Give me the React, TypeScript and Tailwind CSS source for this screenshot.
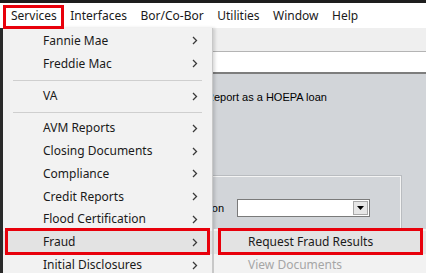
const font = { fontFamily: '"Noto Sans", "Open Sans", sans-serif' };

function Chevron() {
  return (
    <svg width="6" height="9" viewBox="0 0 6 9" className="shrink-0">
      <polyline points="1,1 4.5,4.5 1,8" fill="none" stroke="#3a3a3a" strokeWidth="1.3" />
    </svg>
  );
}

type Item = { label: string; sep?: number };

const items: Item[] = [
  { label: "Fannie Mae" },
  { label: "Freddie Mac" },
  { label: "", sep: 10 },
  { label: "VA" },
  { label: "", sep: 9 },
  { label: "AVM Reports" },
  { label: "Closing Documents" },
  { label: "Compliance" },
  { label: "Credit Reports" },
  { label: "Flood Certification" },
  { label: "Fraud" },
  { label: "Initial Disclosures" },
];

export default function App() {
  return (
    <div className="relative w-[426px] h-[273px] overflow-hidden bg-white text-[12px] text-[#1a1a1a]" style={font}>
      <div className="h-[3px] bg-[#1e1e1e]" />
      {/* menu bar */}
      <div className="h-[25px] flex items-center pl-[11px] gap-[13.5px] bg-white">
        <span>Services</span>
        <span>Interfaces</span>
        <span>Bor/Co-Bor</span>
        <span>Utilities</span>
        <span>Window</span>
        <span>Help</span>
      </div>

      {/* underlying window */}
      <div className="flex h-[245px]">
        <div className="w-[3px] bg-[#2a2a2a]" />
        <div className="flex-1 flex flex-col">
          <div className="h-[24px] bg-[#efefef] border-b border-[#b4b4b4]" />
          <div className="h-[22px] bg-white border-b-2 border-[#7d7d7d]" />
          <div className="flex-1 bg-[#d2d5d9] pl-[203px] pt-[17px]" style={{ fontFamily: '"Liberation Sans", Arial, sans-serif' }}>
            <div className="text-[11px] leading-[13px] text-black">Report as a HOEPA loan</div>
            <div className="mt-[71px] w-[196px] h-[60px] border-t border-r border-[#b9bcc0] shadow-[inset_-1px_1px_0_#f4f4f4] pt-[23px]">
              <div className="h-[18px] flex items-center">
                <div className="w-[18px] flex justify-end">
                  <span className="text-[11px] text-black whitespace-nowrap">Location</span>
                </div>
                <div className="ml-[13px] w-[133px] h-[18px] bg-white border border-[#7a7a7a] flex justify-end p-[1px]">
                  <div className="w-[15px] h-full bg-[#e6e6e6] border border-[#a8a8a8] flex items-center justify-center">
                    <svg width="7" height="4" viewBox="0 0 7 4">
                      <polygon points="0,0 7,0 3.5,4" fill="#000" />
                    </svg>
                  </div>
                </div>
              </div>
            </div>
          </div>
        </div>
      </div>

      {/* Services dropdown */}
      <div className="absolute left-[3px] top-[28px] w-[210px] bottom-0 bg-[#f2f2f2] border-r border-[#c8c8c8] shadow-[2px_0_3px_rgba(0,0,0,0.15)] pt-[1.5px]">
        {items.map((it, i) =>
          it.sep ? (
            <div key={i} className={`${it.sep === 10 ? "h-[10px]" : "h-[9px]"} flex items-center px-[10px]`}>
              <div className="h-px w-full bg-[#cfcfcf]" />
            </div>
          ) : (
            <div
              key={i}
              className={`h-[22.8px] flex items-center pl-[40px] pr-[14px] justify-between ${it.label === "Fraud" ? "bg-[#e3e3e3]" : ""}`}
            >
              <span>{it.label}</span>
              <Chevron />
            </div>
          )
        )}
      </div>

      {/* Fraud submenu */}
      <div className="absolute left-[213px] top-[229px] w-[213px] bottom-0 bg-[#f2f2f2] border-l border-[#c8c8c8] pt-[1.5px]">
        <div className="h-[23px] flex items-center pl-[34px] bg-[#e3e3e3]">Request Fraud Results</div>
        <div className="h-[23px] flex items-center pl-[34px] text-[#a6a6a6]">View Documents</div>
      </div>

      {/* red annotation boxes */}
      <div className="absolute left-[3px] top-[5px] w-[61px] h-[24px] border-[3px] border-[#e8000b]" />
      <div className="absolute left-[5px] top-[228px] w-[205px] h-[27px] border-[3px] border-[#e8000b]" />
      <div className="absolute left-[218px] top-[228px] w-[205px] h-[27px] border-[3px] border-[#e8000b]" />
    </div>
  );
}
